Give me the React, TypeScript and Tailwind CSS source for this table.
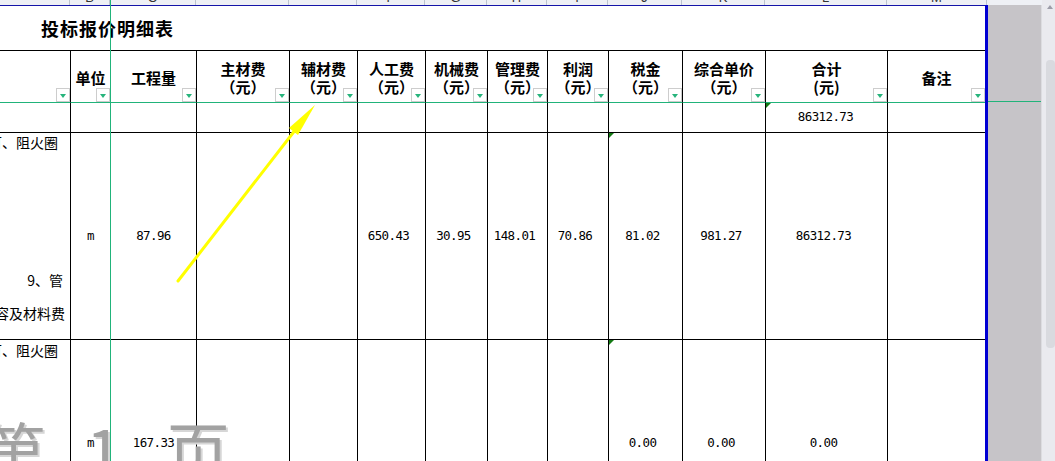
import React from "react";

/* column widths copied from the sheet grid (0 → 985px) */
const GRID =
  "grid grid-cols-[70px_40px_86px_93px_68px_68px_62px_60px_61px_74px_83px_122px_98px]";

const STRIP = [
  { w: "w-[70px]", l: "" },
  { w: "w-[40px]", l: "B" },
  { w: "w-[86px]", l: "C" },
  { w: "w-[93px]", l: "" },
  { w: "w-[68px]", l: "" },
  { w: "w-[68px]", l: "F" },
  { w: "w-[62px]", l: "G" },
  { w: "w-[60px]", l: "H" },
  { w: "w-[61px]", l: "I" },
  { w: "w-[74px]", l: "J" },
  { w: "w-[83px]", l: "K" },
  { w: "w-[122px]", l: "L" },
  { w: "w-[100px]", l: "M" },
];

const HEADERS: { top?: string; bottom?: string }[] = [
  {},
  { top: "单位" },
  { top: "工程量" },
  { top: "主材费", bottom: "（元）" },
  { top: "辅材费", bottom: "（元）" },
  { top: "人工费", bottom: "（元）" },
  { top: "机械费", bottom: "（元）" },
  { top: "管理费", bottom: "（元）" },
  { top: "利润", bottom: "（元）" },
  { top: "税金", bottom: "（元）" },
  { top: "综合单价", bottom: "（元）" },
  { top: "合计", bottom: "(元)" },
  { top: "备注" },
];

const ROW2 = ["", "m", "87.96", "", "", "650.43", "30.95", "148.01", "70.86", "81.02", "981.27", "86312.73", ""];
const ROW3 = ["", "m", "167.33", "", "", "", "", "", "", "0.00", "0.00", "0.00", ""];

function Flag() {
  return (
    <span className="absolute top-0 left-0 w-0 h-0 border-t-[5px] border-t-[#137a13] border-r-[5px] border-r-transparent" />
  );
}

function Filter() {
  return (
    <span className="absolute right-0 bottom-0 w-[14px] h-[14px] bg-white border border-[#cdcdcd] flex items-center justify-center">
      <span className="w-0 h-0 mt-[1px] border-l-[3px] border-l-transparent border-r-[3px] border-r-transparent border-t-[4px] border-t-[#27b47c]" />
    </span>
  );
}

function DataRow({ vals, flagAt, first, height }: { vals: string[]; flagAt: number; first: React.ReactNode; height: string }) {
  return (
    <>
      {vals.map((v, i) => (
        <div
          key={i}
          className={`relative ${height} border-b border-black ${i > 0 ? "border-l" : ""} ${
            i === 0 ? "overflow-hidden" : "flex items-center justify-center"
          } ${i >= 5 ? "pr-[6px]" : ""}`}
        >
          {i === flagAt && <Flag />}
          {i === 0 ? first : <span>{v}</span>}
        </div>
      ))}
    </>
  );
}

export default function App() {
  return (
    <div className="relative w-[1055px] h-[461px] overflow-hidden bg-white flex font-['Noto_Sans_CJK_SC',sans-serif] text-black">
      {/* ── sheet area ── */}
      <div className="w-[1042px] h-full flex flex-col">
        {/* column letters, mostly scrolled out of view */}
        <div className="h-[5px] shrink-0 flex bg-[#eef0f5] overflow-hidden">
          {STRIP.map((c, i) => (
            <div
              key={i}
              className={`${c.w} shrink-0 border-r border-[#bcc3cf] flex justify-center text-[13px] leading-[13px] -mt-[9px] text-[#333] font-['Liberation_Sans',sans-serif]`}
            >
              {c.l}
            </div>
          ))}
          <div className="flex-1" />
        </div>

        <div className="flex flex-1 min-h-0 overflow-hidden">
          <div className="w-[985px] shrink-0 flex flex-col border-t border-[#1414a8] overflow-hidden">
            {/* title */}
            <div className="h-[45px] shrink-0 border-b border-black pl-[41px] flex items-center text-[18px] font-bold tracking-[1px]">
              投标报价明细表
            </div>

            <div className={`${GRID} shrink-0 font-['DejaVu_Sans_Mono',monospace] text-[12.5px] tracking-[-0.6px]`}>
              {/* header row */}
              {HEADERS.map((h, i) => (
                <div
                  key={i}
                  className={`relative h-[52px] border-b border-b-[#21b37a] ${
                    i > 0 ? "border-l border-l-black" : ""
                  } flex flex-col items-center justify-center pt-[2px] text-[15px] leading-[18px] tracking-normal font-bold font-['Noto_Sans_CJK_SC',sans-serif] whitespace-nowrap`}
                >
                  {h.top && <span>{h.top}</span>}
                  {h.bottom && <span>{h.bottom}</span>}
                  <Filter />
                </div>
              ))}

              {/* subtotal row */}
              {HEADERS.map((_, i) => (
                <div
                  key={i}
                  className={`relative h-[30px] border-b border-black ${i > 0 ? "border-l" : ""} flex items-center justify-center pr-[2px]`}
                >
                  {i === 11 && <Flag />}
                  {i === 11 && <span>86312.73</span>}
                </div>
              ))}

              <DataRow
                vals={ROW2}
                flagAt={9}
                height="h-[207px]"
                first={
                  <div className="flex flex-col items-end whitespace-nowrap text-[14px] leading-[18px] tracking-normal font-['Noto_Sans_CJK_SC',sans-serif]">
                    <span className="pr-[12px]">可、阻火圈</span>
                    <span className="pr-[7px] mt-[120px]">9、管</span>
                    <span className="pr-[5px] mt-[15px]">容及材料费</span>
                  </div>
                }
              />
              <DataRow
                vals={ROW3}
                flagAt={9}
                height="h-[207px]"
                first={
                  <div className="flex flex-col items-end whitespace-nowrap text-[14px] leading-[18px] pt-[1px] tracking-normal font-['Noto_Sans_CJK_SC',sans-serif]">
                    <span className="pr-[12px]">可、阻火圈</span>
                  </div>
                }
              />
            </div>
          </div>
          <div className="w-[3px] shrink-0 bg-[#0000d2]" />
          <div className="flex-1 bg-[#c6c4c8] border-r border-[#dcdce0]">
            <div className="mt-[96px] h-px bg-[#21b37a]" />
          </div>
        </div>
      </div>

      {/* ── vertical scrollbar ── */}
      <div className="w-[13px] bg-[#eaeaef] flex flex-col items-end">
        <div className="w-full flex justify-center pt-[5px] pl-[2px]">
          <span className="w-0 h-0 border-l-[3px] border-l-transparent border-r-[3px] border-r-transparent border-b-[4px] border-b-[#9c9ca8]" />
        </div>
        <div className="mt-[51px] w-[9px] h-[288px] rounded-[4px] bg-[#d9dadf]" />
      </div>

      {/* ── frozen pane line ── */}
      <div className="absolute left-[110px] top-0 w-px h-full bg-[#21b37a]" />

      {/* ── page-break preview watermark ── */}
      <div className="absolute inset-0 pointer-events-none text-[64px] leading-none text-[#a2a2a2] [text-shadow:2px_2px_0_#d6d6d6] font-['Noto_Sans_CJK_SC',sans-serif]">
        <span className="absolute left-[-18px] top-[416px]">第</span>
        <span className="absolute left-[86px] top-[416px]">1</span>
        <span className="absolute left-[166px] top-[416px]">页</span>
      </div>

      {/* ── yellow annotation arrow ── */}
      <svg className="absolute inset-0 pointer-events-none" width="1055" height="461" viewBox="0 0 1055 461">
        <line x1="178" y1="281" x2="296" y2="129" stroke="#ffff00" strokeWidth="3" strokeLinecap="round" />
        <polygon points="315,105 289,128 298,135" fill="#ffff00" />
      </svg>
    </div>
  );
}
